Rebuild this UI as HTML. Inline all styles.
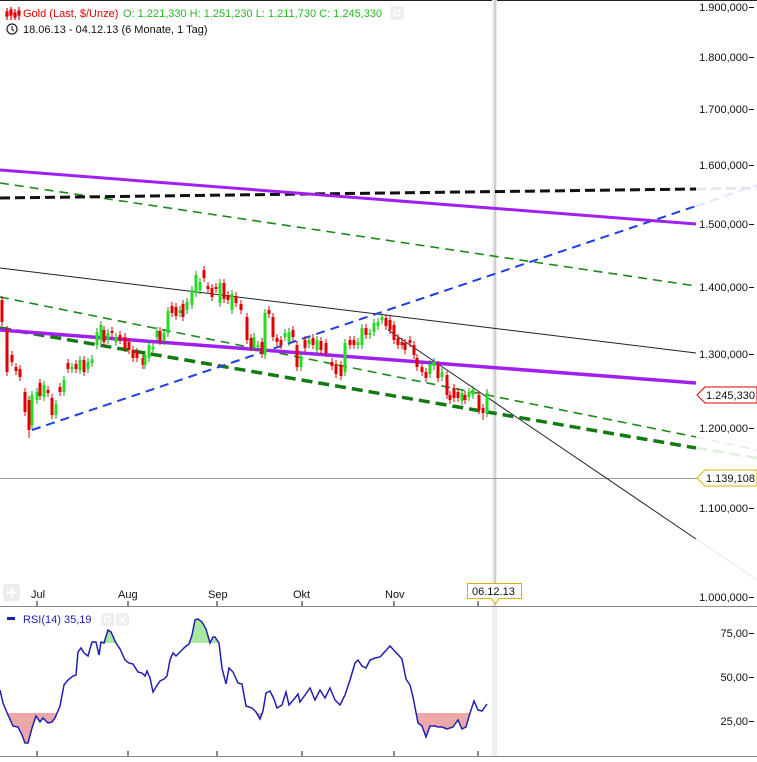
<!DOCTYPE html>
<html><head><meta charset="utf-8"><style>
body{margin:0;width:757px;height:757px;overflow:hidden;background:#fff;font-family:"Liberation Sans",sans-serif;}
svg text{font-family:"Liberation Sans",sans-serif;font-size:11px;}
</style></head><body>
<svg width="757" height="757" viewBox="0 0 757 757" xmlns="http://www.w3.org/2000/svg">
<rect x="0" y="0" width="757" height="757" fill="#fff"/>
<line x1="0" y1="0.5" x2="757" y2="0.5" stroke="#222"/>
<rect x="492" y="0" width="5" height="757" fill="#eeeeee"/>
<line x1="495" y1="0" x2="495" y2="606" stroke="#b0b0b0"/>
<line x1="0" y1="478.5" x2="700" y2="478.5" stroke="#999"/>
<line x1="0" y1="268" x2="696" y2="353" stroke="#222" stroke-width="1"/>
<line x1="388" y1="330" x2="696" y2="539" stroke="#222" stroke-width="1"/>
<line x1="696" y1="539" x2="757" y2="580" stroke="#e6e6e6" stroke-width="1"/>
<line x1="0" y1="183" x2="696" y2="286" stroke="#1a8a1a" stroke-width="1.6" stroke-dasharray="9,6"/>
<line x1="0" y1="297" x2="696" y2="437" stroke="#1a8a1a" stroke-width="1.6" stroke-dasharray="9,6"/>
<line x1="696" y1="437" x2="757" y2="450" stroke="#e2f0e2" stroke-width="1.6" stroke-dasharray="9,6"/>
<line x1="0" y1="328" x2="696" y2="448" stroke="#137a13" stroke-width="3.5" stroke-dasharray="11,6"/>
<line x1="696" y1="448" x2="757" y2="458" stroke="#e2f0e2" stroke-width="3" stroke-dasharray="11,6"/>
<line x1="0" y1="198" x2="696" y2="189" stroke="#111" stroke-width="3" stroke-dasharray="10,5"/>
<line x1="696" y1="189" x2="757" y2="188" stroke="#e6e6e6" stroke-width="3" stroke-dasharray="10,5"/>
<line x1="32" y1="430" x2="696" y2="206" stroke="#1f3fe6" stroke-width="2" stroke-dasharray="9,6"/>
<line x1="696" y1="206" x2="757" y2="185" stroke="#e0e6fb" stroke-width="2" stroke-dasharray="9,6"/>
<line x1="0" y1="170" x2="696" y2="224" stroke="#a020f0" stroke-width="3"/>
<line x1="0" y1="330" x2="696" y2="383" stroke="#a020f0" stroke-width="3.5"/>
<path fill="none" stroke="#e00000" stroke-width="1" d="M2,296V326M7,326V376M12,351V366M16,363V375M20,365V381M25,388V416M29,396V438M40,379V400M48,386V397M52,394V419M60,383V396M68,359V373M76,360V373M84,356V376M104,326V346M112,327V337M120,331V344M125,333V352M129,338V354M133,346V362M137,348V362M143,354V369M160,327V345M172,302V317M176,303V320M183,300V321M204,266V282M208,282V293M212,284V301M216,283V293M224,279V303M228,291V304M236,292V307M241,300V314M247,313V344M251,334V351M262,338V358M269,306V318M273,313V341M277,334V346M281,336V349M293,326V341M297,341V371M305,336V352M313,334V349M321,337V354M326,339V357M332,358V370M336,360V378M341,361V380M350,336V349M354,336V349M366,324V339M386,314V330M390,316V334M394,321V344M398,334V349M402,338V349M405,339V354M410,336V347M414,341V359M417,354V371M422,363V376M426,368V382M438,361V382M447,371V399M450,391V404M454,384V402M458,388V402M465,391V404M479,391V414M483,404V420"/>
<path fill="none" stroke="#e00000" stroke-width="3" d="M2,300V322M7,330V372M12,355V362M16,367V371M20,369V377M25,392V412M29,400V430M40,383V396M48,390V393M52,398V415M60,387V392M68,363V369M76,364V369M84,360V372M104,330V342M112,331V333M120,335V340M125,337V348M129,342V350M133,350V358M137,352V358M143,358V365M160,331V341M172,306V313M176,307V316M183,304V317M204,270V278M208,286V289M212,288V297M216,287V289M224,283V299M228,295V300M236,296V303M241,304V310M247,317V340M251,338V347M262,342V354M269,310V314M273,317V337M277,338V342M281,340V345M293,330V337M297,345V367M305,340V348M313,338V345M321,341V350M326,343V353M332,362V366M336,364V374M341,365V376M350,340V345M354,340V345M366,328V335M386,318V326M390,320V330M394,325V340M398,338V345M402,342V345M405,343V350M410,340V343M414,345V355M417,358V367M422,367V372M426,372V378M438,365V378M447,375V395M450,395V400M454,388V398M458,392V398M465,395V400M479,395V410M483,408V413"/>
<path fill="none" stroke="#159915" stroke-width="1" d="M32,391V429M37,388V404M44,381V401M56,400V419M64,376V396M72,363V373M80,356V374M88,358V373M92,355V367M97,328V349M101,321V344M108,329V344M116,333V346M145,351V369M149,341V362M153,343V352M157,327V341M164,329V345M168,307V337M180,306V317M187,298V314M192,286V309M196,271V297M200,278V294M220,279V307M232,290V314M254,333V351M258,341V351M265,309V359M285,329V341M289,328V346M301,353V371M309,336V348M317,336V354M345,339V376M358,338V349M362,324V349M370,329V339M374,319V336M378,318V330M382,313V324M430,360V378M434,358V370M442,368V381M462,389V405M469,388V401M473,386V399M487,389V417"/>
<path fill="none" stroke="#22dd22" stroke-width="3" d="M32,395V425M37,392V400M44,385V397M56,404V415M64,380V392M72,367V369M80,360V370M88,362V369M92,359V363M97,332V345M101,325V340M108,333V340M116,337V342M145,355V365M149,345V358M153,347V349M157,331V337M164,333V341M168,311V333M180,310V313M187,302V310M192,290V305M196,275V293M200,282V290M220,283V303M232,294V310M254,337V347M258,345V347M265,313V355M285,333V337M289,332V342M301,357V367M309,340V344M317,340V350M345,343V372M358,342V345M362,328V345M370,333V335M374,323V332M378,322V326M382,317V320M430,364V374M434,362V366M442,372V377M462,393V401M469,392V397M473,390V395M487,393V413"/>
<g fill="#111" text-anchor="end">
<text x="748" y="11">1.900,000</text><text x="748" y="61">1.800,000</text><text x="748" y="113">1.700,000</text>
<text x="748" y="169">1.600,000</text><text x="748" y="228">1.500,000</text><text x="748" y="291">1.400,000</text>
<text x="748" y="358">1.300,000</text><text x="748" y="432">1.200,000</text><text x="748" y="512">1.100,000</text>
<text x="748" y="601">1.000,000</text>
<text x="748" y="637">75,00</text><text x="748" y="681">50,00</text><text x="748" y="725">25,00</text>
</g>
<g stroke="#111"><path d="M749,7.5h5M749,57.5h5M749,109.5h5M749,165.5h5M749,224.5h5M749,287.5h5M749,354.5h5M749,428.5h5M749,508.5h5M749,597.5h5M749,633.5h5M749,677.5h5M749,721.5h5"/></g>
<path d="M697,395 L705,387 H757 V403 H705 Z" fill="#fff" stroke="#e00000"/>
<text x="706" y="399" fill="#111">1.245,330</text>
<path d="M697,478 L705,470 H757 V486 H705 Z" fill="#fff" stroke="#e0b000"/>
<text x="706" y="482" fill="#111">1.139,108</text>
<line x1="0" y1="606.5" x2="757" y2="606.5" stroke="#888"/>
<line x1="0" y1="756.5" x2="757" y2="756.5" stroke="#888"/>
<g fill="#111"><text x="31" y="598">Jul</text><text x="118" y="598">Aug</text><text x="208" y="598">Sep</text><text x="293" y="598">Okt</text><text x="385" y="598">Nov</text></g>
<path stroke="#111" d="M37,601v5M128,601v5M217,601v5M302,601v5M394,601v5M478,601v5M37,751v5M128,751v5M217,751v5M302,751v5M394,751v5M478,751v5"/>
<rect x="3" y="584" width="17" height="17" rx="3" fill="#ececec"/>
<path d="M11.5,587v11M6,592.5h11" stroke="#fff" stroke-width="2"/>
<path d="M467.5,583.5h54v15h-22l-4,5l-4,-5h-24z" fill="#fff" stroke="#e0b000"/>
<text x="472" y="595" fill="#111">06.12.13</text>
<defs>
<clipPath id="up"><rect x="0" y="600" width="700" height="43"/></clipPath>
<clipPath id="dn"><rect x="0" y="713" width="700" height="40"/></clipPath>
</defs>
<path clip-path="url(#up)" fill="#a8e8a0" d="M0,690L3,703L8,715L13,726L18,727L22,735L25,743L28,743L32,728L36,716L40,722L43,718L48,723L52,722L55,718L60,706L64,685L68,680L73,676L76,675L78,652L81,648L84,653L88,656L92,642L96,642L99,655L101,642L104,643L108,630L111,632L116,643L120,649L125,660L129,663L133,664L138,672L142,673L145,676L147,671L150,678L153,692L156,687L160,681L164,679L167,676L170,660L173,653L176,656L180,652L185,647L189,644L192,635L195,620L198,619L202,622L206,629L210,643L213,637L215,637L219,643L222,668L226,684V643H0Z"/>
<path clip-path="url(#dn)" fill="#eaa8a8" d="M0,690L3,703L8,715L13,726L18,727L22,735L25,743L28,743L32,728L36,716L40,722L43,718L48,723L52,722L55,718L60,706L64,685V713H0ZM246,706L252,708L256,712L260,719L263,711L266,693V713H246ZM406,679L410,685L413,697L418,723L422,726L426,737L430,726L435,726L438,727L442,727L447,729L453,727L458,720L462,729L466,727L470,713L474,701V713H406Z"/>
<path fill="none" stroke="#2020b0" stroke-width="1.5" d="M0,690L3,703L8,715L13,726L18,727L22,735L25,743L28,743L32,728L36,716L40,722L43,718L48,723L52,722L55,718L60,706L64,685L68,680L73,676L76,675L78,652L81,648L84,653L88,656L92,642L96,642L99,655L101,642L104,643L108,630L111,632L116,643L120,649L125,660L129,663L133,664L138,672L142,673L145,676L147,671L150,678L153,692L156,687L160,681L164,679L167,676L170,660L173,653L176,656L180,652L185,647L189,644L192,635L195,620L198,619L202,622L206,629L210,643L213,637L215,637L219,643L222,668L226,684L229,668L233,672L238,683L242,684L246,706L252,708L256,712L260,719L263,711L266,693L270,691L274,699L277,708L282,705L286,692L289,705L295,698L298,694L300,702L305,695L310,688L315,700L320,690L325,698L330,688L335,700L340,705L345,695L350,680L355,663L358,660L362,666L366,668L370,660L375,658L380,657L390,646L402,659L406,679L410,685L413,697L418,723L422,726L426,737L430,726L435,726L438,727L442,727L447,729L453,727L458,720L462,729L466,727L470,713L474,701L478,710L482,711L487,704"/>
<rect x="7" y="617" width="8" height="3" fill="#2020b0"/>
<text x="23" y="623" fill="#2020b0">RSI(14)  35,19</text>
<rect x="101" y="613" width="13" height="13" rx="2" fill="#eee"/>
<rect x="116" y="613" width="13" height="13" rx="2" fill="#eee"/>
<circle cx="107.5" cy="619.5" r="3" fill="none" stroke="#fff" stroke-width="1.5"/>
<path d="M119,616l7,7M126,616l-7,7" stroke="#fff" stroke-width="1.5"/>
<g stroke="#e00000" stroke-width="1.2" fill="none">
<path d="M7,8v12M11,7v13M15,9v11M19,7v13"/>
<rect x="6" y="12" width="2" height="4" fill="#e00000"/><rect x="10" y="10" width="2" height="5" fill="#e00000"/><rect x="14" y="13" width="2" height="4" fill="#e00000"/><rect x="18" y="11" width="2" height="4" fill="#e00000"/>
</g>
<text x="23" y="17" fill="#e00000">Gold (Last, $/Unze)</text>
<text x="123" y="17" fill="#22bb22">O: 1.221,330  H: 1.251,230  L: 1.211,730  C: 1.245,330</text>
<rect x="390" y="6" width="14" height="14" rx="2" fill="#eee"/>
<circle cx="397" cy="13" r="3" fill="none" stroke="#fff" stroke-width="1.5"/>
<circle cx="12" cy="29" r="5" fill="none" stroke="#222" stroke-width="1.2"/>
<path d="M12,26v3.5l2,1.5" fill="none" stroke="#222" stroke-width="1.1"/>
<text x="23" y="33" fill="#111">18.06.13 - 04.12.13 (6 Monate, 1 Tag)</text>
</svg>
</body></html>
